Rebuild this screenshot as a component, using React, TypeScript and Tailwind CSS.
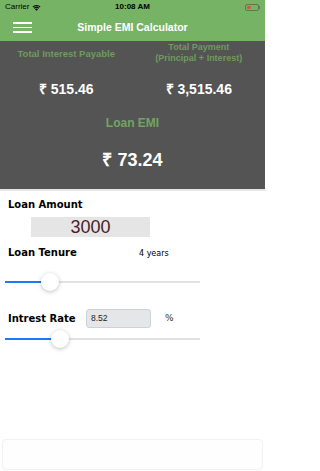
import React from 'react';

const sans = { fontFamily: '"Liberation Sans", Arial, sans-serif' };
const verdana = { fontFamily: '"DejaVu Sans", Verdana, sans-serif' };

function StatusBar() {
  return (
    <div className="relative flex h-[14px] items-center px-[5px] text-[8px] text-black" style={sans}>
      <div className="flex items-center gap-[3px]">
        <span>Carrier</span>
        <svg width="9" height="7" viewBox="0 0 18 14">
          <path d="M9 13.5 6 10.3a4.3 4.3 0 0 1 6 0z" fill="#000" />
          <path d="M3.6 7.8a7.7 7.7 0 0 1 10.8 0l-1.6 1.7a5.4 5.4 0 0 0-7.6 0z" fill="#000" />
          <path d="M1 5.1a11.4 11.4 0 0 1 16 0l-1.6 1.7a9 9 0 0 0-12.8 0z" fill="#000" />
        </svg>
      </div>
      <span className="absolute left-0 right-0 text-center font-bold">10:08 AM</span>
      <div className="ml-auto flex items-center">
        <div className="flex h-[7px] w-[14px] items-stretch rounded-[2px] border border-[#5a7a52] p-[1px]">
          <div className="w-[4px] rounded-[1px] bg-[#e0533a]" />
        </div>
        <div className="h-[3px] w-[1px] bg-[#5a7a52]" />
      </div>
    </div>
  );
}

function Slider({ pos }: { pos: number }) {
  return (
    <div className="flex h-[20px] items-center pl-[5px]">
      <div className="relative h-[2px] w-[195px] bg-[#e2e2e2]">
        <div className="h-full bg-[#1b7bf0]" style={{ width: pos }} />
        <div
          className="absolute top-1/2 h-[18px] w-[18px] -translate-x-1/2 -translate-y-1/2 rounded-full bg-white shadow-[0_1px_4px_rgba(0,0,0,0.25)]"
          style={{ left: pos }}
        />
      </div>
    </div>
  );
}

export default function App() {
  return (
    <div className="flex h-[471px] w-[265px] flex-col overflow-hidden bg-white">
      {/* header */}
      <div className="h-[41px] bg-[#77b365]">
        <StatusBar />
        <div className="relative flex h-[27px] items-center">
          <div className="ml-[13px] flex w-[19px] flex-col gap-[3px]">
            <div className="h-[1.5px] bg-white" />
            <div className="h-[1.5px] bg-white" />
            <div className="h-[1.5px] bg-white" />
          </div>
          <span className="absolute left-0 right-0 text-center text-[10.5px] font-bold text-white" style={sans}>
            Simple EMI Calculator
          </span>
        </div>
      </div>

      {/* results */}
      <div className="flex h-[148px] flex-col bg-[#545454]" style={sans}>
        <div className="grid h-[24px] grid-cols-2 items-center text-center text-[9px] font-bold leading-[11px] text-[#6d9c5c]">
          <span className="text-[9.5px]">Total Interest Payable</span>
          <span>
            Total Payment
            <br />
            (Principal + Interest)
          </span>
        </div>
        <div className="mt-[14px] grid h-[18px] grid-cols-2 items-center text-center text-[14px] font-bold text-white">
          <span>₹ 515.46</span>
          <span>₹ 3,515.46</span>
        </div>
        <div className="mt-[18px] flex h-[16px] items-center justify-center text-[12px] font-bold text-[#72a462]">
          Loan EMI
        </div>
        <div className="mt-[18px] flex h-[22px] items-center justify-center text-[18px] font-bold text-white">
          ₹ 73.24
        </div>
      </div>

      {/* inputs */}
      <div className="flex flex-1 flex-col border-t-[2px] border-[#e6e6e6]">
        <div className="mt-[6px] flex h-[14px] items-center pl-[8px] text-[10px] font-bold text-black" style={verdana}>
          Loan Amount
        </div>
        <div
          className="ml-[31px] mt-[6px] flex h-[20px] w-[119px] items-center justify-center bg-[#e5e5e5] text-[18px] text-[#4b1d26]"
          style={sans}
        >
          3000
        </div>
        <div className="mt-[8px] flex h-[14px] items-center pl-[8px] text-black" style={verdana}>
          <span className="w-[131px] text-[10px] font-bold">Loan Tenure</span>
          <span className="mt-[3px] text-[8px]">4 years</span>
        </div>
        <div className="mt-[13px]">
          <Slider pos={45} />
        </div>
        <div className="mt-[17px] flex h-[19px] items-center pl-[8px] text-black" style={verdana}>
          <span className="w-[78px] text-[10px] font-bold">Intrest Rate</span>
          <div
            className="flex h-[19px] w-[65px] items-center rounded-[3px] border border-[#cfd2d4] bg-[#e4e6e8] pl-[4px] text-[8.5px] text-[#222]"
            style={sans}
          >
            8.52
          </div>
          <span className="ml-[14px] text-[9px] text-[#333]">%</span>
        </div>
        <div className="mt-[1px]">
          <Slider pos={55} />
        </div>

        {/* bottom bar */}
        <div className="mx-[2px] mb-[1px] mt-auto h-[31px] rounded-[4px] border border-[#f1f1f1] bg-[#fefefe]" />
      </div>
    </div>
  );
}
